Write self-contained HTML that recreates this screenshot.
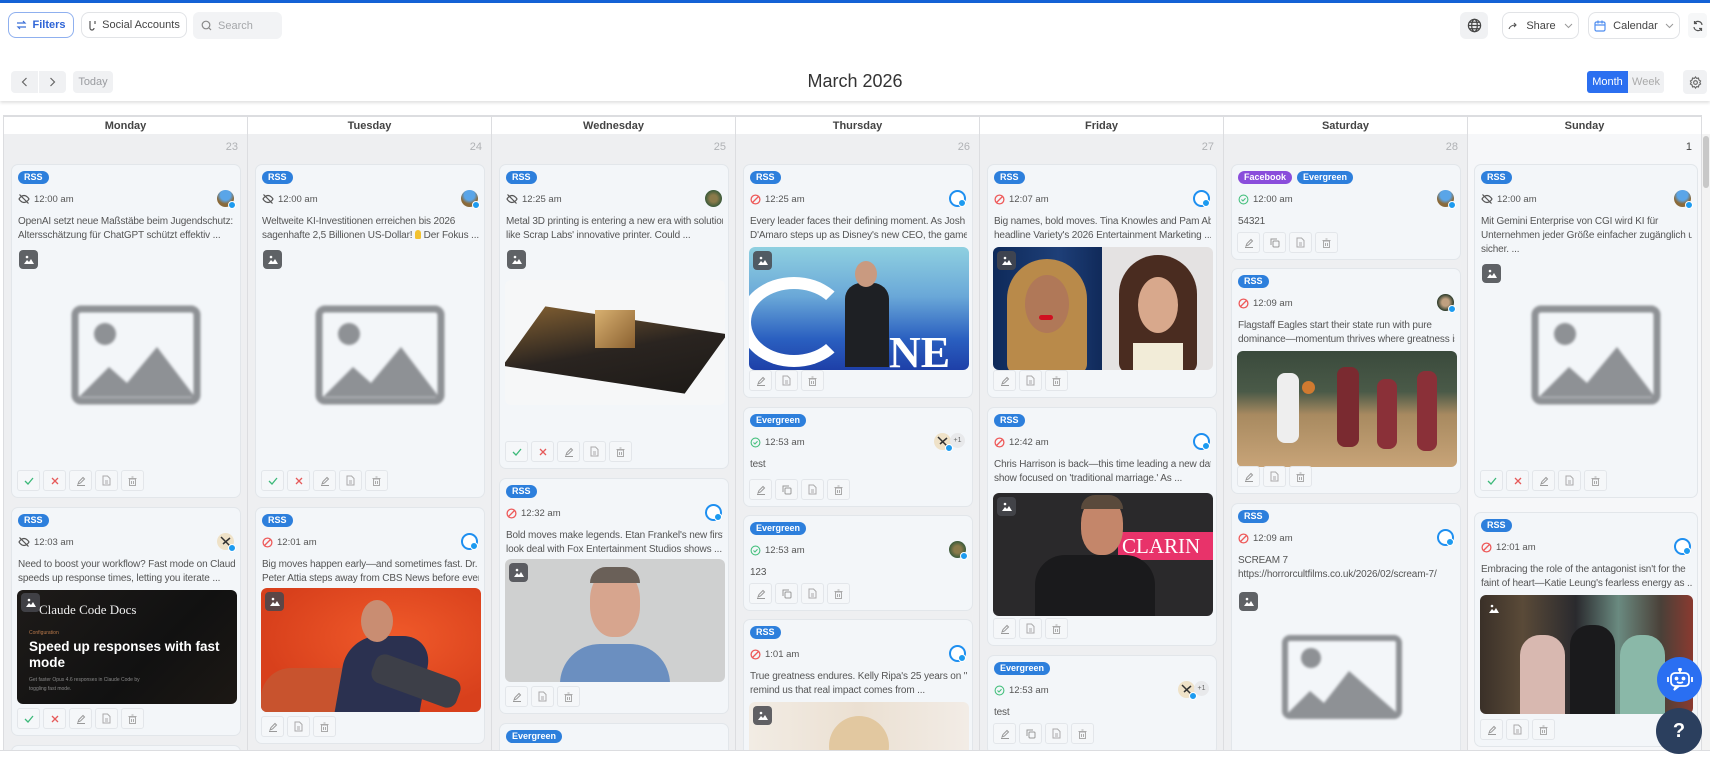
<!DOCTYPE html>
<html><head><meta charset="utf-8"><style>
*{box-sizing:border-box;margin:0;padding:0}
html,body{width:1710px;height:760px;overflow:hidden}
body{background:#fff;font-family:"Liberation Sans","DejaVu Sans",sans-serif;position:relative;color:#333}
.abs{position:absolute}
.clip{position:absolute;left:0;top:0;width:1710px;height:750px;overflow:hidden}
.topline{left:0;top:0;width:1710px;height:3px;background:#1462d6}
.hdr{left:0;top:3px;width:1710px;height:98px;background:#fff;box-shadow:0 2px 3px rgba(0,0,0,.12)}
.btn{position:absolute;border:1px solid #e1e3e6;border-radius:8px;background:#fff;font-size:11px;color:#444;display:flex;align-items:center;justify-content:center;gap:5px}
.gbtn{position:absolute;background:#f0f1f3;border-radius:4px;display:flex;align-items:center;justify-content:center;font-size:11px;color:#9a9ca0}
.title{left:0;width:1710px;top:71px;text-align:center;font-size:18px;color:#333}
.col{position:absolute;top:134px;height:616px;background:#eeeff1;border-right:1px solid #dcdde0}
.dh{position:absolute;top:116px;height:19px;font-size:11px;font-weight:bold;color:#444;text-align:center;line-height:18px;border:1px solid #dcdde0;border-left:none;background:#fff}
.dn{position:absolute;top:141px;font-size:11px;color:#b0b2b5;text-align:right}
.card{position:absolute;background:#f3f6f9;border:1px solid #e2e6ea;border-radius:7px;padding:6px 5px;overflow:hidden}
.tags{height:13px;display:flex;gap:5px;margin-left:1px}
.tag{height:13px;border-radius:7px;background:#2d7fdc;color:#fff;font-size:9px;font-weight:bold;line-height:13px;padding:0 6px}
.tag.fb{background:#8a4ddb}
.tr{height:16px;margin-top:7px;display:flex;align-items:center;gap:4px;font-size:9.5px;color:#555;position:relative;margin-left:1px}
.av{position:absolute;right:1px;top:-1px;width:17px;height:17px;border-radius:50%}
.av i{position:absolute;right:-2px;bottom:-2px;width:8px;height:8px;border-radius:50%;background:#1d9bf0;border:1px solid #fff}
.tx{margin-top:8px;font-size:10px;letter-spacing:-0.15px;line-height:14px;color:#555;white-space:nowrap;overflow:hidden;margin-left:1px}
.acts{position:absolute;left:5px;bottom:6px;display:flex;gap:3px}
.ab{width:23px;height:21px;border:1px solid #e3e6ea;border-radius:3px;background:#f5f7f9;display:flex;align-items:center;justify-content:center}
.img{position:absolute;left:5px;border-radius:6px;overflow:hidden}
.bdg{position:absolute;left:5px;top:5px;width:19px;height:19px;border-radius:4px;background:rgba(70,72,78,.85);display:flex;align-items:center;justify-content:center}
.ph{position:absolute;border:none}
.plus{position:absolute;right:-14px;top:0;width:15px;height:15px;border-radius:50%;background:#e8e9eb;font-size:7px;color:#666;text-align:center;line-height:15px}
</style></head><body>
<div class="abs topline"></div>
<div class="abs hdr"></div>

<div class="btn" style="left:8px;top:12px;width:66px;height:26px;border:1.5px solid #8fb0ef;color:#2e64d6;font-weight:bold">
<svg width="11" height="10" viewBox="0 0 11 10"><path d="M1 3h8l-2-2M10 7H2l2 2" stroke="#3b6fd8" fill="none" stroke-width="1.2"/></svg>Filters</div>
<div class="btn" style="left:81px;top:12px;width:106px;height:26px">
<svg width="9" height="11" viewBox="0 0 9 11"><path d="M2 1v7a2 2 0 0 0 4 0M7 1v3" stroke="#555" fill="none" stroke-width="1.2"/></svg>Social Accounts</div>
<div class="gbtn" style="left:193px;top:12px;width:89px;height:27px;justify-content:flex-start;padding-left:8px;gap:6px;border-radius:6px;background:#f2f3f5">
<svg width="11" height="11" viewBox="0 0 11 11"><circle cx="5" cy="5" r="3.8" stroke="#888" fill="none" stroke-width="1.2"/><path d="M8 8l2 2" stroke="#888" stroke-width="1.2"/></svg><span style="color:#a5a7aa">Search</span></div>

<div class="gbtn" style="left:1460px;top:12px;width:28px;height:27px;border-radius:6px">
<svg width="15" height="15" viewBox="0 0 16 16" fill="none" stroke="#444" stroke-width="1.3"><circle cx="8" cy="8" r="6.5"/><ellipse cx="8" cy="8" rx="3" ry="6.5"/><path d="M1.5 8h13M2.5 4.5h11M2.5 11.5h11"/></svg></div>
<div class="btn" style="left:1502px;top:12px;width:77px;height:27px;gap:8px">
<svg width="10" height="8" viewBox="0 0 10 8"><path d="M1 7c1-3 3-4 7-4M6 1l2 2-2 2" stroke="#555" fill="none" stroke-width="1.1"/></svg>Share<svg width="9" height="6" viewBox="0 0 9 6"><path d="M1 1l3.5 3.5L8 1" stroke="#999" fill="none"/></svg></div>
<div class="btn" style="left:1588px;top:12px;width:92px;height:27px;gap:7px">
<svg width="12" height="12" viewBox="0 0 12 12"><rect x="1" y="2" width="10" height="9" rx="1.5" stroke="#4f8ef0" fill="none" stroke-width="1.2"/><path d="M1 5h10M4 0.5v3M8 0.5v3" stroke="#4f8ef0" stroke-width="1.2"/></svg>Calendar<svg width="9" height="6" viewBox="0 0 9 6"><path d="M1 1l3.5 3.5L8 1" stroke="#999" fill="none"/></svg></div>
<div class="gbtn" style="left:1688px;top:13px;width:19px;height:25px;background:#f6f7f8">
<svg width="12" height="12" viewBox="0 0 12 12" fill="none" stroke="#555" stroke-width="1.2"><path d="M10 5A4 4 0 0 0 2.5 3.5M2 7a4 4 0 0 0 7.5 1.5M2.5 1v2.5H5M9.5 11V8.5H7"/></svg></div>

<div class="gbtn" style="left:11px;top:71px;width:27px;height:22px;border-radius:4px 0 0 4px"><svg width="7" height="10" viewBox="0 0 7 10"><path d="M5.5 1L1.5 5l4 4" stroke="#666" fill="none" stroke-width="1.2"/></svg></div>
<div class="gbtn" style="left:39px;top:71px;width:27px;height:22px;border-radius:0 4px 4px 0"><svg width="7" height="10" viewBox="0 0 7 10"><path d="M1.5 1l4 4-4 4" stroke="#666" fill="none" stroke-width="1.2"/></svg></div>
<div class="gbtn" style="left:73px;top:71px;width:40px;height:22px">Today</div>
<div class="abs title">March 2026</div>
<div class="gbtn" style="left:1587px;top:71px;width:41px;height:22px;background:#2b6ff0;color:#fff;border-radius:3px 0 0 3px">Month</div>
<div class="gbtn" style="left:1628px;top:71px;width:36px;height:22px;border-radius:0 3px 3px 0;color:#aaa">Week</div>
<div class="gbtn" style="left:1683px;top:70px;width:24px;height:24px"><svg width="13" height="13" viewBox="0 0 14 14" fill="none" stroke="#666" stroke-width="1.2"><circle cx="7" cy="7" r="2"/><path d="M7 1l1.2 1.6 2-.4.4 2L12.5 5.4 11.6 7l.9 1.6-1.9 1.2-.4 2-2-.4L7 13l-1.2-1.6-2 .4-.4-2L1.5 8.6 2.4 7l-.9-1.6 1.9-1.2.4-2 2 .4z"/></svg></div>

<div class="clip">
<div class="abs" style="left:4px;top:115px;width:1698px;height:1px;background:#dcdde0"></div>
<div class="abs" style="left:3px;top:115px;width:1px;height:635px;background:#dcdde0"></div>
<div class="dh" style="left:4px;width:244px">Monday</div>
<div class="dh" style="left:248px;width:244px">Tuesday</div>
<div class="dh" style="left:492px;width:244px">Wednesday</div>
<div class="dh" style="left:736px;width:244px">Thursday</div>
<div class="dh" style="left:980px;width:244px">Friday</div>
<div class="dh" style="left:1224px;width:244px">Saturday</div>
<div class="dh" style="left:1468px;width:234px">Sunday</div>
<div class="col" style="left:4px;width:244px"></div>
<div class="col" style="left:248px;width:244px"></div>
<div class="col" style="left:492px;width:244px"></div>
<div class="col" style="left:736px;width:244px"></div>
<div class="col" style="left:980px;width:244px"></div>
<div class="col" style="left:1224px;width:244px"></div>
<div class="col" style="left:1468px;width:234px;background:#f6f7f9"></div>
<div class="abs" style="left:1702px;top:134px;width:8px;height:616px;background:#f3f3f3"></div>
<div class="abs" style="left:1703px;top:136px;width:6px;height:52px;background:#c8c8c8;border-radius:3px"></div>

<div class="dn" style="left:200px;width:38px">23</div>
<div class="dn" style="left:444px;width:38px">24</div>
<div class="dn" style="left:688px;width:38px">25</div>
<div class="dn" style="left:932px;width:38px">26</div>
<div class="dn" style="left:1176px;width:38px">27</div>
<div class="dn" style="left:1420px;width:38px">28</div>
<div class="dn" style="left:1654px;width:38px;color:#444">1</div>

<!-- MONDAY 1 -->
<div class="card" style="left:11px;top:164px;width:230px;height:334px">
<div class="tags"><span class="tag">RSS</span></div>
<div class="tr"><svg width="12" height="12" viewBox="0 0 12 12" fill="none" stroke="#555" stroke-width="1.2"><path d="M1 6s2-3.5 5-3.5S11 6 11 6 9 9.5 6 9.5 1 6 1 6z"/><path d="M1.5 1.5l9 9"/></svg>12:00 am<span class="av" style="background:radial-gradient(circle at 50% 30%,#5aa5e8 35%,#8a6a3a 60%)"><i></i></span></div>
<div class="tx">OpenAI setzt neue Maßstäbe beim Jugendschutz: Die<br>Altersschätzung für ChatGPT schützt effektiv ...</div>
<div class="bdg" style="left:7px;top:85px;background:#5f6266"><svg width="10" height="9" viewBox="0 0 10 9"><circle cx="3" cy="2" r="1.3" fill="#fff"/><path d="M0 9l3-4 2 2 2-3 3 5z" fill="#fff"/></svg></div>
<svg class="ph" style="left:55px;top:114px;filter:blur(1.3px)" width="138" height="153" viewBox="0 0 138 153"><rect x="8" y="30" width="122" height="92" rx="6" fill="none" stroke="#8e9195" stroke-width="7"/><circle cx="38" cy="55" r="11" fill="#8e9195"/><path d="M12 118l30-30 18 16 30-36 38 50z" fill="#8e9195"/></svg>
<div class="acts"><div class="ab"><svg width="10" height="8"><path d="M1 4l3 3 5-6" stroke="#3cb979" fill="none" stroke-width="1.3"/></svg></div><div class="ab"><svg width="8" height="8"><path d="M1 1l6 6M7 1l-6 6" stroke="#e65a5a" stroke-width="1.3"/></svg></div><div class="ab"><svg width="10" height="10"><path d="M2 8l1-2.5 4-4 1.5 1.5-4 4zM1 9.5h8" stroke="#999" fill="none"/></svg></div><div class="ab"><svg width="9" height="11"><path d="M1 1h4.5L8 3.5V10H1zM3 6h3M3 8h3" stroke="#aaa" fill="none"/></svg></div><div class="ab"><svg width="9" height="10"><path d="M1.5 3h6v6.5h-6zM0.5 2.5h8M3.5 1h2M3.5 5v3M5.5 5v3" stroke="#aaa" fill="none"/></svg></div></div>
</div>

<!-- MONDAY 2 -->
<div class="card" style="left:11px;top:507px;width:230px;height:229px">
<div class="tags"><span class="tag">RSS</span></div>
<div class="tr"><svg width="12" height="12" viewBox="0 0 12 12" fill="none" stroke="#555" stroke-width="1.2"><path d="M1 6s2-3.5 5-3.5S11 6 11 6 9 9.5 6 9.5 1 6 1 6z"/><path d="M1.5 1.5l9 9"/></svg>12:03 am<span class="av" style="background:#efe2c8"><svg width="17" height="17"><path d="M4 4l9 9M13 5l-7 6" stroke="#333" stroke-width="1.5"/></svg><i></i></span></div>
<div class="tx">Need to boost your workflow? Fast mode on Claude<br>speeds up response times, letting you iterate ...</div>
<div class="img" style="top:82px;width:220px;height:114px;background:linear-gradient(135deg,#1e1b19,#111 60%,#1c1814)">
<div class="abs" style="left:22px;top:12px;font-family:'Liberation Serif',serif;color:#eee;font-size:13px">Claude Code Docs</div>
<div class="abs" style="left:12px;top:40px;color:#b8784a;font-size:5px">Configuration</div>
<div class="abs" style="left:12px;top:49px;color:#fff;font-size:13.5px;font-weight:bold;line-height:16px;white-space:nowrap">Speed up responses with fast<br>mode</div>
<div class="abs" style="left:12px;top:86px;color:#888;font-size:5px;line-height:9px">Get faster Opus 4.6 responses in Claude Code by<br>toggling fast mode.</div>
<div class="bdg" style="left:4px;top:3px"><svg width="10" height="9" viewBox="0 0 10 9"><circle cx="3" cy="2" r="1.3" fill="#fff"/><path d="M0 9l3-4 2 2 2-3 3 5z" fill="#fff"/></svg></div></div>
<div class="acts"><div class="ab"><svg width="10" height="8"><path d="M1 4l3 3 5-6" stroke="#3cb979" fill="none" stroke-width="1.3"/></svg></div><div class="ab"><svg width="8" height="8"><path d="M1 1l6 6M7 1l-6 6" stroke="#e65a5a" stroke-width="1.3"/></svg></div><div class="ab"><svg width="10" height="10"><path d="M2 8l1-2.5 4-4 1.5 1.5-4 4zM1 9.5h8" stroke="#999" fill="none"/></svg></div><div class="ab"><svg width="9" height="11"><path d="M1 1h4.5L8 3.5V10H1zM3 6h3M3 8h3" stroke="#aaa" fill="none"/></svg></div><div class="ab"><svg width="9" height="10"><path d="M1.5 3h6v6.5h-6zM0.5 2.5h8M3.5 1h2M3.5 5v3M5.5 5v3" stroke="#aaa" fill="none"/></svg></div></div>
</div>
<div class="card" style="left:11px;top:745px;width:230px;height:40px"><div class="tags"><span class="tag">RSS</span></div></div>

<!-- TUESDAY 1 -->
<div class="card" style="left:255px;top:164px;width:230px;height:334px">
<div class="tags"><span class="tag">RSS</span></div>
<div class="tr"><svg width="12" height="12" viewBox="0 0 12 12" fill="none" stroke="#555" stroke-width="1.2"><path d="M1 6s2-3.5 5-3.5S11 6 11 6 9 9.5 6 9.5 1 6 1 6z"/><path d="M1.5 1.5l9 9"/></svg>12:00 am<span class="av" style="background:radial-gradient(circle at 50% 30%,#5aa5e8 35%,#8a6a3a 60%)"><i></i></span></div>
<div class="tx">Weltweite KI-Investitionen erreichen bis 2026<br>sagenhafte 2,5 Billionen US-Dollar! <span style="display:inline-block;width:6px;height:9px;border-radius:4px 4px 2px 2px;background:#f2c230;vertical-align:-1px"></span> Der Fokus ...</div>
<div class="bdg" style="left:7px;top:85px;background:#5f6266"><svg width="10" height="9" viewBox="0 0 10 9"><circle cx="3" cy="2" r="1.3" fill="#fff"/><path d="M0 9l3-4 2 2 2-3 3 5z" fill="#fff"/></svg></div>
<svg class="ph" style="left:55px;top:114px;filter:blur(1.3px)" width="138" height="153" viewBox="0 0 138 153"><rect x="8" y="30" width="122" height="92" rx="6" fill="none" stroke="#8e9195" stroke-width="7"/><circle cx="38" cy="55" r="11" fill="#8e9195"/><path d="M12 118l30-30 18 16 30-36 38 50z" fill="#8e9195"/></svg>
<div class="acts"><div class="ab"><svg width="10" height="8"><path d="M1 4l3 3 5-6" stroke="#3cb979" fill="none" stroke-width="1.3"/></svg></div><div class="ab"><svg width="8" height="8"><path d="M1 1l6 6M7 1l-6 6" stroke="#e65a5a" stroke-width="1.3"/></svg></div><div class="ab"><svg width="10" height="10"><path d="M2 8l1-2.5 4-4 1.5 1.5-4 4zM1 9.5h8" stroke="#999" fill="none"/></svg></div><div class="ab"><svg width="9" height="11"><path d="M1 1h4.5L8 3.5V10H1zM3 6h3M3 8h3" stroke="#aaa" fill="none"/></svg></div><div class="ab"><svg width="9" height="10"><path d="M1.5 3h6v6.5h-6zM0.5 2.5h8M3.5 1h2M3.5 5v3M5.5 5v3" stroke="#aaa" fill="none"/></svg></div></div>
</div>

<!-- TUESDAY 2 -->
<div class="card" style="left:255px;top:507px;width:230px;height:237px">
<div class="tags"><span class="tag">RSS</span></div>
<div class="tr"><svg width="11" height="11" viewBox="0 0 12 12" fill="none" stroke="#ee5a5a" stroke-width="1.4"><circle cx="6" cy="6" r="4.8"/><path d="M2.6 9.4l6.8-6.8"/></svg>12:01 am<span class="av" style="background:#fff;border:2px solid #1e8ff0"><i></i></span></div>
<div class="tx">Big moves happen early—and sometimes fast. Dr.<br>Peter Attia steps away from CBS News before even ...</div>
<div class="img" style="top:80px;width:220px;height:124px;background:radial-gradient(ellipse at 60% 40%,#f05a2a,#d8401c 70%)">
<div class="abs" style="left:0;top:80px;width:110px;height:50px;background:#c8532e;border-radius:30px 30px 0 0"></div>
<div class="abs" style="left:80px;top:48px;width:85px;height:80px;background:#2b3150;border-radius:30px 30px 0 0;transform:skewX(-10deg)"></div>
<div class="abs" style="left:110px;top:78px;width:90px;height:30px;background:#3d3f48;border-radius:10px;transform:rotate(20deg)"></div>
<div class="abs" style="left:100px;top:12px;width:32px;height:42px;background:#c98d72;border-radius:50%"></div>
<div class="bdg" style="left:4px;top:4px"><svg width="10" height="9" viewBox="0 0 10 9"><circle cx="3" cy="2" r="1.3" fill="#fff"/><path d="M0 9l3-4 2 2 2-3 3 5z" fill="#fff"/></svg></div></div>
<div class="acts"><div class="ab"><svg width="10" height="10"><path d="M2 8l1-2.5 4-4 1.5 1.5-4 4zM1 9.5h8" stroke="#999" fill="none"/></svg></div><div class="ab"><svg width="9" height="11"><path d="M1 1h4.5L8 3.5V10H1zM3 6h3M3 8h3" stroke="#aaa" fill="none"/></svg></div><div class="ab"><svg width="9" height="10"><path d="M1.5 3h6v6.5h-6zM0.5 2.5h8M3.5 1h2M3.5 5v3M5.5 5v3" stroke="#aaa" fill="none"/></svg></div></div>
</div>

<!-- WEDNESDAY 1 -->
<div class="card" style="left:499px;top:164px;width:230px;height:305px">
<div class="tags"><span class="tag">RSS</span></div>
<div class="tr"><svg width="12" height="12" viewBox="0 0 12 12" fill="none" stroke="#555" stroke-width="1.2"><path d="M1 6s2-3.5 5-3.5S11 6 11 6 9 9.5 6 9.5 1 6 1 6z"/><path d="M1.5 1.5l9 9"/></svg>12:25 am<span class="av" style="background:radial-gradient(circle,#8a7a4a 30%,#3a5a3a 70%)"></span></div>
<div class="tx">Metal 3D printing is entering a new era with solutions<br>like Scrap Labs' innovative printer. Could ...</div>
<div class="bdg" style="left:7px;top:85px;background:#5f6266"><svg width="10" height="9" viewBox="0 0 10 9"><circle cx="3" cy="2" r="1.3" fill="#fff"/><path d="M0 9l3-4 2 2 2-3 3 5z" fill="#fff"/></svg></div>
<div class="img" style="top:115px;width:220px;height:125px;background:#f6f7f8">
<div class="abs" style="left:10px;top:40px;width:200px;height:60px;background:linear-gradient(160deg,#7a5a30,#2a2420 50%,#1e1b18);transform:skewX(-30deg) rotate(8deg)"></div>
<div class="abs" style="left:90px;top:30px;width:40px;height:38px;background:linear-gradient(135deg,#d8b070,#8a6030)"></div></div>
<div class="acts"><div class="ab"><svg width="10" height="8"><path d="M1 4l3 3 5-6" stroke="#3cb979" fill="none" stroke-width="1.3"/></svg></div><div class="ab"><svg width="8" height="8"><path d="M1 1l6 6M7 1l-6 6" stroke="#e65a5a" stroke-width="1.3"/></svg></div><div class="ab"><svg width="10" height="10"><path d="M2 8l1-2.5 4-4 1.5 1.5-4 4zM1 9.5h8" stroke="#999" fill="none"/></svg></div><div class="ab"><svg width="9" height="11"><path d="M1 1h4.5L8 3.5V10H1zM3 6h3M3 8h3" stroke="#aaa" fill="none"/></svg></div><div class="ab"><svg width="9" height="10"><path d="M1.5 3h6v6.5h-6zM0.5 2.5h8M3.5 1h2M3.5 5v3M5.5 5v3" stroke="#aaa" fill="none"/></svg></div></div>
</div>

<!-- WEDNESDAY 2 -->
<div class="card" style="left:499px;top:478px;width:230px;height:236px">
<div class="tags"><span class="tag">RSS</span></div>
<div class="tr"><svg width="11" height="11" viewBox="0 0 12 12" fill="none" stroke="#ee5a5a" stroke-width="1.4"><circle cx="6" cy="6" r="4.8"/><path d="M2.6 9.4l6.8-6.8"/></svg>12:32 am<span class="av" style="background:#fff;border:2px solid #1e8ff0"><i></i></span></div>
<div class="tx">Bold moves make legends. Etan Frankel's new first-<br>look deal with Fox Entertainment Studios shows ...</div>
<div class="img" style="top:80px;width:220px;height:123px;background:#cfd0d0">
<div class="abs" style="left:55px;top:85px;width:110px;height:50px;background:#6b8fc0;border-radius:40px 40px 0 0"></div>
<div class="abs" style="left:85px;top:10px;width:50px;height:68px;background:#d7a58e;border-radius:45%"></div>
<div class="abs" style="left:85px;top:8px;width:50px;height:16px;background:#6a6058;border-radius:20px 20px 0 0"></div>
<div class="bdg" style="left:4px;top:4px"><svg width="10" height="9" viewBox="0 0 10 9"><circle cx="3" cy="2" r="1.3" fill="#fff"/><path d="M0 9l3-4 2 2 2-3 3 5z" fill="#fff"/></svg></div></div>
<div class="acts"><div class="ab"><svg width="10" height="10"><path d="M2 8l1-2.5 4-4 1.5 1.5-4 4zM1 9.5h8" stroke="#999" fill="none"/></svg></div><div class="ab"><svg width="9" height="11"><path d="M1 1h4.5L8 3.5V10H1zM3 6h3M3 8h3" stroke="#aaa" fill="none"/></svg></div><div class="ab"><svg width="9" height="10"><path d="M1.5 3h6v6.5h-6zM0.5 2.5h8M3.5 1h2M3.5 5v3M5.5 5v3" stroke="#aaa" fill="none"/></svg></div></div>
</div>
<div class="card" style="left:499px;top:723px;width:230px;height:40px"><div class="tags"><span class="tag">Evergreen</span></div></div>

<!-- THURSDAY 1 -->
<div class="card" style="left:743px;top:164px;width:230px;height:234px">
<div class="tags"><span class="tag">RSS</span></div>
<div class="tr"><svg width="11" height="11" viewBox="0 0 12 12" fill="none" stroke="#ee5a5a" stroke-width="1.4"><circle cx="6" cy="6" r="4.8"/><path d="M2.6 9.4l6.8-6.8"/></svg>12:25 am<span class="av" style="background:#fff;border:2px solid #1e8ff0"><i></i></span></div>
<div class="tx">Every leader faces their defining moment. As Josh<br>D'Amaro steps up as Disney's new CEO, the game ...</div>
<div class="img" style="top:82px;width:220px;height:123px;background:linear-gradient(180deg,#8fd0e0,#6aa8d8 40%,#2a5fc0 75%,#1e40a8)">
<div class="abs" style="left:-10px;top:30px;width:110px;height:90px;border:12px solid #fff;border-radius:50%;border-right-color:transparent"></div>
<div class="abs" style="left:140px;top:80px;color:#fff;font-size:44px;font-weight:bold;font-family:'Liberation Serif',serif">NE</div>
<div class="abs" style="left:96px;top:36px;width:44px;height:84px;background:#1e2024;border-radius:16px 16px 0 0"></div>
<div class="abs" style="left:106px;top:14px;width:22px;height:26px;background:#c99a80;border-radius:50%"></div>
<div class="bdg" style="left:4px;top:4px"><svg width="10" height="9" viewBox="0 0 10 9"><circle cx="3" cy="2" r="1.3" fill="#fff"/><path d="M0 9l3-4 2 2 2-3 3 5z" fill="#fff"/></svg></div></div>
<div class="acts"><div class="ab"><svg width="10" height="10"><path d="M2 8l1-2.5 4-4 1.5 1.5-4 4zM1 9.5h8" stroke="#999" fill="none"/></svg></div><div class="ab"><svg width="9" height="11"><path d="M1 1h4.5L8 3.5V10H1zM3 6h3M3 8h3" stroke="#aaa" fill="none"/></svg></div><div class="ab"><svg width="9" height="10"><path d="M1.5 3h6v6.5h-6zM0.5 2.5h8M3.5 1h2M3.5 5v3M5.5 5v3" stroke="#aaa" fill="none"/></svg></div></div>
</div>

<!-- THURSDAY 2 -->
<div class="card" style="left:743px;top:407px;width:230px;height:100px">
<div class="tags"><span class="tag">Evergreen</span></div>
<div class="tr"><svg width="11" height="11" viewBox="0 0 12 12" fill="none" stroke="#46c07e" stroke-width="1.2"><circle cx="6" cy="6" r="4.8"/><path d="M3.8 6l1.6 1.6 2.8-3"/></svg>12:53 am<span class="av" style="right:16px;background:#efe2c8"><svg width="17" height="17"><path d="M4 4l9 9M13 5l-7 6" stroke="#333" stroke-width="1.5"/></svg><i></i><span class="plus">+1</span></span></div>
<div class="tx">test</div>
<div class="acts"><div class="ab"><svg width="10" height="10"><path d="M2 8l1-2.5 4-4 1.5 1.5-4 4zM1 9.5h8" stroke="#999" fill="none"/></svg></div><div class="ab"><svg width="10" height="10"><rect x="3" y="3" width="6" height="6" rx="1" stroke="#999" fill="none"/><path d="M1 7V1h6" stroke="#999" fill="none"/></svg></div><div class="ab"><svg width="9" height="11"><path d="M1 1h4.5L8 3.5V10H1zM3 6h3M3 8h3" stroke="#aaa" fill="none"/></svg></div><div class="ab"><svg width="9" height="10"><path d="M1.5 3h6v6.5h-6zM0.5 2.5h8M3.5 1h2M3.5 5v3M5.5 5v3" stroke="#aaa" fill="none"/></svg></div></div>
</div>

<!-- THURSDAY 3 -->
<div class="card" style="left:743px;top:515px;width:230px;height:96px">
<div class="tags"><span class="tag">Evergreen</span></div>
<div class="tr"><svg width="11" height="11" viewBox="0 0 12 12" fill="none" stroke="#46c07e" stroke-width="1.2"><circle cx="6" cy="6" r="4.8"/><path d="M3.8 6l1.6 1.6 2.8-3"/></svg>12:53 am<span class="av" style="background:radial-gradient(circle,#8a7a4a 30%,#3a5a3a 70%)"><i></i></span></div>
<div class="tx">123</div>
<div class="acts"><div class="ab"><svg width="10" height="10"><path d="M2 8l1-2.5 4-4 1.5 1.5-4 4zM1 9.5h8" stroke="#999" fill="none"/></svg></div><div class="ab"><svg width="10" height="10"><rect x="3" y="3" width="6" height="6" rx="1" stroke="#999" fill="none"/><path d="M1 7V1h6" stroke="#999" fill="none"/></svg></div><div class="ab"><svg width="9" height="11"><path d="M1 1h4.5L8 3.5V10H1zM3 6h3M3 8h3" stroke="#aaa" fill="none"/></svg></div><div class="ab"><svg width="9" height="10"><path d="M1.5 3h6v6.5h-6zM0.5 2.5h8M3.5 1h2M3.5 5v3M5.5 5v3" stroke="#aaa" fill="none"/></svg></div></div>
</div>

<!-- THURSDAY 4 -->
<div class="card" style="left:743px;top:619px;width:230px;height:150px">
<div class="tags"><span class="tag">RSS</span></div>
<div class="tr"><svg width="11" height="11" viewBox="0 0 12 12" fill="none" stroke="#ee5a5a" stroke-width="1.4"><circle cx="6" cy="6" r="4.8"/><path d="M2.6 9.4l6.8-6.8"/></svg>1:01 am<span class="av" style="background:#fff;border:2px solid #1e8ff0"><i></i></span></div>
<div class="tx">True greatness endures. Kelly Ripa's 25 years on "Live"<br>remind us that real impact comes from ...</div>
<div class="img" style="top:82px;width:220px;height:60px;background:linear-gradient(90deg,#f2ece4,#ebe0d2 50%,#f2ece6)">
<div class="abs" style="left:80px;top:14px;width:60px;height:60px;background:#e2c8a0;border-radius:50%"></div>
<div class="bdg" style="left:4px;top:4px"><svg width="10" height="9" viewBox="0 0 10 9"><circle cx="3" cy="2" r="1.3" fill="#fff"/><path d="M0 9l3-4 2 2 2-3 3 5z" fill="#fff"/></svg></div></div>
</div>

<!-- FRIDAY 1 -->
<div class="card" style="left:987px;top:164px;width:230px;height:234px">
<div class="tags"><span class="tag">RSS</span></div>
<div class="tr"><svg width="11" height="11" viewBox="0 0 12 12" fill="none" stroke="#ee5a5a" stroke-width="1.4"><circle cx="6" cy="6" r="4.8"/><path d="M2.6 9.4l6.8-6.8"/></svg>12:07 am<span class="av" style="background:#fff;border:2px solid #1e8ff0"><i></i></span></div>
<div class="tx">Big names, bold moves. Tina Knowles and Pam Abdy<br>headline Variety's 2026 Entertainment Marketing ...</div>
<div class="img" style="top:82px;width:220px;height:123px;background:#e4e2e2">
<div class="abs" style="left:0;top:0;width:109px;height:123px;background:linear-gradient(90deg,#0e2a5a,#1e3f78 60%,#102a5a)"></div>
<div class="abs" style="left:14px;top:12px;width:80px;height:115px;background:#b98a4a;border-radius:40px 40px 10px 10px"></div>
<div class="abs" style="left:32px;top:28px;width:44px;height:58px;background:#b07858;border-radius:50%"></div>
<div class="abs" style="left:46px;top:68px;width:14px;height:5px;background:#d01020;border-radius:3px"></div>
<div class="abs" style="left:126px;top:8px;width:78px;height:118px;background:#4a2c20;border-radius:40px 40px 10px 10px"></div>
<div class="abs" style="left:145px;top:30px;width:40px;height:56px;background:#d8a88c;border-radius:50%"></div>
<div class="abs" style="left:140px;top:96px;width:50px;height:30px;background:#f2ecd8"></div>
<div class="bdg" style="left:4px;top:4px"><svg width="10" height="9" viewBox="0 0 10 9"><circle cx="3" cy="2" r="1.3" fill="#fff"/><path d="M0 9l3-4 2 2 2-3 3 5z" fill="#fff"/></svg></div></div>
<div class="acts"><div class="ab"><svg width="10" height="10"><path d="M2 8l1-2.5 4-4 1.5 1.5-4 4zM1 9.5h8" stroke="#999" fill="none"/></svg></div><div class="ab"><svg width="9" height="11"><path d="M1 1h4.5L8 3.5V10H1zM3 6h3M3 8h3" stroke="#aaa" fill="none"/></svg></div><div class="ab"><svg width="9" height="10"><path d="M1.5 3h6v6.5h-6zM0.5 2.5h8M3.5 1h2M3.5 5v3M5.5 5v3" stroke="#aaa" fill="none"/></svg></div></div>
</div>

<!-- FRIDAY 2 -->
<div class="card" style="left:987px;top:407px;width:230px;height:239px">
<div class="tags"><span class="tag">RSS</span></div>
<div class="tr"><svg width="11" height="11" viewBox="0 0 12 12" fill="none" stroke="#ee5a5a" stroke-width="1.4"><circle cx="6" cy="6" r="4.8"/><path d="M2.6 9.4l6.8-6.8"/></svg>12:42 am<span class="av" style="background:#fff;border:2px solid #1e8ff0"><i></i></span></div>
<div class="tx">Chris Harrison is back—this time leading a new dating<br>show focused on 'traditional marriage.' As ...</div>
<div class="img" style="top:85px;width:220px;height:123px;background:#2a292b">
<div class="abs" style="left:125px;top:39px;width:95px;height:28px;background:#e8336a;color:#fff;font-family:'Liberation Serif',serif;font-size:21px;line-height:28px;padding-left:4px">CLARIN</div>
<div class="abs" style="left:42px;top:62px;width:120px;height:65px;background:#1a1a1c;border-radius:30px 30px 0 0"></div>
<div class="abs" style="left:88px;top:4px;width:42px;height:58px;background:#c4866a;border-radius:45%"></div>
<div class="abs" style="left:88px;top:2px;width:42px;height:14px;background:#5a4a3c;border-radius:20px 20px 0 0"></div>
<div class="bdg" style="left:4px;top:4px"><svg width="10" height="9" viewBox="0 0 10 9"><circle cx="3" cy="2" r="1.3" fill="#fff"/><path d="M0 9l3-4 2 2 2-3 3 5z" fill="#fff"/></svg></div></div>
<div class="acts"><div class="ab"><svg width="10" height="10"><path d="M2 8l1-2.5 4-4 1.5 1.5-4 4zM1 9.5h8" stroke="#999" fill="none"/></svg></div><div class="ab"><svg width="9" height="11"><path d="M1 1h4.5L8 3.5V10H1zM3 6h3M3 8h3" stroke="#aaa" fill="none"/></svg></div><div class="ab"><svg width="9" height="10"><path d="M1.5 3h6v6.5h-6zM0.5 2.5h8M3.5 1h2M3.5 5v3M5.5 5v3" stroke="#aaa" fill="none"/></svg></div></div>
</div>

<!-- FRIDAY 3 -->
<div class="card" style="left:987px;top:655px;width:230px;height:100px">
<div class="tags"><span class="tag">Evergreen</span></div>
<div class="tr"><svg width="11" height="11" viewBox="0 0 12 12" fill="none" stroke="#46c07e" stroke-width="1.2"><circle cx="6" cy="6" r="4.8"/><path d="M3.8 6l1.6 1.6 2.8-3"/></svg>12:53 am<span class="av" style="right:16px;background:#efe2c8"><svg width="17" height="17"><path d="M4 4l9 9M13 5l-7 6" stroke="#333" stroke-width="1.5"/></svg><i></i><span class="plus">+1</span></span></div>
<div class="tx">test</div>
<div class="acts" style="bottom:auto;top:67px"><div class="ab"><svg width="10" height="10"><path d="M2 8l1-2.5 4-4 1.5 1.5-4 4zM1 9.5h8" stroke="#999" fill="none"/></svg></div><div class="ab"><svg width="10" height="10"><rect x="3" y="3" width="6" height="6" rx="1" stroke="#999" fill="none"/><path d="M1 7V1h6" stroke="#999" fill="none"/></svg></div><div class="ab"><svg width="9" height="11"><path d="M1 1h4.5L8 3.5V10H1zM3 6h3M3 8h3" stroke="#aaa" fill="none"/></svg></div><div class="ab"><svg width="9" height="10"><path d="M1.5 3h6v6.5h-6zM0.5 2.5h8M3.5 1h2M3.5 5v3M5.5 5v3" stroke="#aaa" fill="none"/></svg></div></div>
</div>

<!-- SATURDAY 1 -->
<div class="card" style="left:1231px;top:164px;width:230px;height:96px">
<div class="tags"><span class="tag fb">Facebook</span><span class="tag">Evergreen</span></div>
<div class="tr"><svg width="11" height="11" viewBox="0 0 12 12" fill="none" stroke="#46c07e" stroke-width="1.2"><circle cx="6" cy="6" r="4.8"/><path d="M3.8 6l1.6 1.6 2.8-3"/></svg>12:00 am<span class="av" style="background:radial-gradient(circle at 50% 30%,#5aa5e8 35%,#8a6a3a 60%)"><i></i></span></div>
<div class="tx">54321</div>
<div class="acts"><div class="ab"><svg width="10" height="10"><path d="M2 8l1-2.5 4-4 1.5 1.5-4 4zM1 9.5h8" stroke="#999" fill="none"/></svg></div><div class="ab"><svg width="10" height="10"><rect x="3" y="3" width="6" height="6" rx="1" stroke="#999" fill="none"/><path d="M1 7V1h6" stroke="#999" fill="none"/></svg></div><div class="ab"><svg width="9" height="11"><path d="M1 1h4.5L8 3.5V10H1zM3 6h3M3 8h3" stroke="#aaa" fill="none"/></svg></div><div class="ab"><svg width="9" height="10"><path d="M1.5 3h6v6.5h-6zM0.5 2.5h8M3.5 1h2M3.5 5v3M5.5 5v3" stroke="#aaa" fill="none"/></svg></div></div>
</div>

<!-- SATURDAY 2 -->
<div class="card" style="left:1231px;top:268px;width:230px;height:226px">
<div class="tags"><span class="tag">RSS</span></div>
<div class="tr"><svg width="11" height="11" viewBox="0 0 12 12" fill="none" stroke="#ee5a5a" stroke-width="1.4"><circle cx="6" cy="6" r="4.8"/><path d="M2.6 9.4l6.8-6.8"/></svg>12:09 am<span class="av" style="background:radial-gradient(circle,#c0a080 30%,#2a3a2a 70%)"><i></i></span></div>
<div class="tx">Flagstaff Eagles start their state run with pure<br>dominance—momentum thrives where greatness is ...</div>
<div class="img" style="top:82px;width:220px;height:116px;background:linear-gradient(180deg,#3a4a3c,#4a5a48 35%,#a88a60 55%,#c8a478 100%)">
<div class="abs" style="left:40px;top:22px;width:22px;height:70px;background:#eee;border-radius:8px"></div>
<div class="abs" style="left:100px;top:16px;width:22px;height:80px;background:#7a2a30;border-radius:8px"></div>
<div class="abs" style="left:140px;top:28px;width:20px;height:70px;background:#8a3038;border-radius:8px"></div>
<div class="abs" style="left:180px;top:20px;width:20px;height:80px;background:#8a3038;border-radius:8px"></div>
<div class="abs" style="left:65px;top:30px;width:13px;height:13px;background:#d07a30;border-radius:50%"></div></div>
<div class="acts"><div class="ab"><svg width="10" height="10"><path d="M2 8l1-2.5 4-4 1.5 1.5-4 4zM1 9.5h8" stroke="#999" fill="none"/></svg></div><div class="ab"><svg width="9" height="11"><path d="M1 1h4.5L8 3.5V10H1zM3 6h3M3 8h3" stroke="#aaa" fill="none"/></svg></div><div class="ab"><svg width="9" height="10"><path d="M1.5 3h6v6.5h-6zM0.5 2.5h8M3.5 1h2M3.5 5v3M5.5 5v3" stroke="#aaa" fill="none"/></svg></div></div>
</div>

<!-- SATURDAY 3 -->
<div class="card" style="left:1231px;top:503px;width:230px;height:260px">
<div class="tags"><span class="tag">RSS</span></div>
<div class="tr"><svg width="11" height="11" viewBox="0 0 12 12" fill="none" stroke="#ee5a5a" stroke-width="1.4"><circle cx="6" cy="6" r="4.8"/><path d="M2.6 9.4l6.8-6.8"/></svg>12:09 am<span class="av" style="background:#fff;border:2px solid #1e8ff0"><i></i></span></div>
<div class="tx">SCREAM 7<br>https://horrorcultfilms.co.uk/2026/02/scream-7/</div>
<div class="bdg" style="left:7px;top:88px;background:#5f6266"><svg width="10" height="9" viewBox="0 0 10 9"><circle cx="3" cy="2" r="1.3" fill="#fff"/><path d="M0 9l3-4 2 2 2-3 3 5z" fill="#fff"/></svg></div>
<svg class="ph" style="left:45px;top:130px;filter:blur(1.3px)" width="130" height="130" viewBox="0 0 130 130"><rect x="8" y="4" width="114" height="78" rx="5" fill="none" stroke="#8e9195" stroke-width="6"/><circle cx="34" cy="24" r="10" fill="#8e9195"/><path d="M11 79l22-22 14 12 25-32 48 42z" fill="#8e9195"/></svg>
</div>

<!-- SUNDAY 1 -->
<div class="card" style="left:1474px;top:164px;width:224px;height:334px">
<div class="tags"><span class="tag">RSS</span></div>
<div class="tr"><svg width="12" height="12" viewBox="0 0 12 12" fill="none" stroke="#555" stroke-width="1.2"><path d="M1 6s2-3.5 5-3.5S11 6 11 6 9 9.5 6 9.5 1 6 1 6z"/><path d="M1.5 1.5l9 9"/></svg>12:00 am<span class="av" style="background:radial-gradient(circle at 50% 30%,#5aa5e8 35%,#8a6a3a 60%)"><i></i></span></div>
<div class="tx">Mit Gemini Enterprise von CGI wird KI für<br>Unternehmen jeder Größe einfacher zugänglich und<br>sicher. ...</div>
<div class="bdg" style="left:7px;top:99px;background:#5f6266"><svg width="10" height="9" viewBox="0 0 10 9"><circle cx="3" cy="2" r="1.3" fill="#fff"/><path d="M0 9l3-4 2 2 2-3 3 5z" fill="#fff"/></svg></div>
<svg class="ph" style="left:52px;top:114px;filter:blur(1.3px)" width="138" height="153" viewBox="0 0 138 153"><rect x="8" y="30" width="122" height="92" rx="6" fill="none" stroke="#8e9195" stroke-width="7"/><circle cx="38" cy="55" r="11" fill="#8e9195"/><path d="M12 118l30-30 18 16 30-36 38 50z" fill="#8e9195"/></svg>
<div class="acts"><div class="ab"><svg width="10" height="8"><path d="M1 4l3 3 5-6" stroke="#3cb979" fill="none" stroke-width="1.3"/></svg></div><div class="ab"><svg width="8" height="8"><path d="M1 1l6 6M7 1l-6 6" stroke="#e65a5a" stroke-width="1.3"/></svg></div><div class="ab"><svg width="10" height="10"><path d="M2 8l1-2.5 4-4 1.5 1.5-4 4zM1 9.5h8" stroke="#999" fill="none"/></svg></div><div class="ab"><svg width="9" height="11"><path d="M1 1h4.5L8 3.5V10H1zM3 6h3M3 8h3" stroke="#aaa" fill="none"/></svg></div><div class="ab"><svg width="9" height="10"><path d="M1.5 3h6v6.5h-6zM0.5 2.5h8M3.5 1h2M3.5 5v3M5.5 5v3" stroke="#aaa" fill="none"/></svg></div></div>
</div>

<!-- SUNDAY 2 -->
<div class="card" style="left:1474px;top:512px;width:224px;height:235px">
<div class="tags"><span class="tag">RSS</span></div>
<div class="tr"><svg width="11" height="11" viewBox="0 0 12 12" fill="none" stroke="#ee5a5a" stroke-width="1.4"><circle cx="6" cy="6" r="4.8"/><path d="M2.6 9.4l6.8-6.8"/></svg>12:01 am<span class="av" style="background:#fff;border:2px solid #1e8ff0"><i></i></span></div>
<div class="tx">Embracing the role of the antagonist isn't for the<br>faint of heart—Katie Leung's fearless energy as ...</div>
<div class="img" style="top:82px;width:213px;height:119px;background:linear-gradient(90deg,#3a3028,#5a4a38 20%,#2a2a2e 45%,#6a8a80 65%,#4a4038 85%,#8a3a30)">
<div class="abs" style="left:40px;top:40px;width:45px;height:80px;background:#d8b8b0;border-radius:20px 20px 0 0"></div>
<div class="abs" style="left:90px;top:30px;width:45px;height:90px;background:#1a1a1c;border-radius:20px 20px 0 0"></div>
<div class="abs" style="left:140px;top:40px;width:45px;height:80px;background:#8ab8a8;border-radius:20px 20px 0 0"></div>
<div class="bdg" style="left:4px;top:4px;background:transparent"><svg width="10" height="9" viewBox="0 0 10 9"><circle cx="3" cy="2" r="1.3" fill="#fff"/><path d="M0 9l3-4 2 2 2-3 3 5z" fill="#fff"/></svg></div></div>
<div class="acts"><div class="ab"><svg width="10" height="10"><path d="M2 8l1-2.5 4-4 1.5 1.5-4 4zM1 9.5h8" stroke="#999" fill="none"/></svg></div><div class="ab"><svg width="9" height="11"><path d="M1 1h4.5L8 3.5V10H1zM3 6h3M3 8h3" stroke="#aaa" fill="none"/></svg></div><div class="ab"><svg width="9" height="10"><path d="M1.5 3h6v6.5h-6zM0.5 2.5h8M3.5 1h2M3.5 5v3M5.5 5v3" stroke="#aaa" fill="none"/></svg></div></div>
</div>
</div>

<div class="abs" style="left:0;top:750px;width:1710px;height:10px;background:#fff;border-top:1px solid #dcdde0"></div>

<!-- floating -->
<div class="abs" style="left:1657px;top:657px;width:45px;height:45px;border-radius:50%;background:#2a6ff2;display:flex;align-items:center;justify-content:center">
<svg width="28" height="24" viewBox="0 0 28 24" fill="none" stroke="#fff" stroke-width="1.8"><path d="M14 1v4"/><circle cx="14" cy="1.5" r="1" fill="#fff"/><rect x="5" y="5" width="18" height="13" rx="4"/><path d="M10 18l-2 4 5-4"/><circle cx="10.5" cy="10.5" r="1" fill="#fff"/><circle cx="17.5" cy="10.5" r="1" fill="#fff"/><path d="M11 14c2 1.3 4 1.3 6 0M2 9v5M26 9v5"/></svg></div>
<div class="abs" style="left:1656px;top:708px;width:46px;height:46px;border-radius:50%;background:#2b3f5e;color:#fff;font-weight:bold;font-size:20px;text-align:center;line-height:46px">?</div>
</body></html>
